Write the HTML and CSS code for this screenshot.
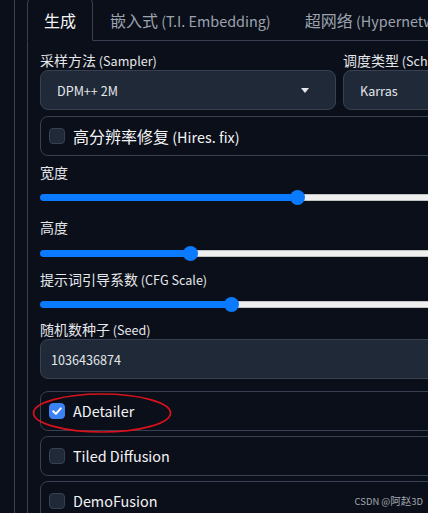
FILE: index.html
```html
<!DOCTYPE html>
<html lang="zh">
<head>
<meta charset="utf-8">
<title>生成</title>
<link rel="stylesheet" href="styles.css">
</head>
<body>
<div class="page">
  <div class="tab-nav">
    <div class="tab active">生成</div>
    <div class="tab">嵌入式<span class="en"> (T.I. Embedding)</span></div>
    <div class="tab">超网络<span class="en"> (Hypernetworks)</span></div>
  </div>
  <div class="panel">
    <div class="row2">
      <div class="field">
        <div class="label">采样方法<span class="en"> (Sampler)</span></div>
        <div class="select"><span class="en">DPM++ 2M</span><span class="caret"></span></div>
      </div>
      <div class="field">
        <div class="label">调度类型<span class="en"> (Schedule type)</span></div>
        <div class="select select-b"><span class="en">Karras</span></div>
      </div>
    </div>

    <div class="box hires"><span class="cb"></span><span class="cb-label">高分辨率修复<span class="en"> (Hires. fix)</span></span></div>

    <div class="label l-width">宽度</div>
    <div class="slider s-width">
      <div class="fill" style="width:257px"></div><div class="thumb"></div><div class="rest"></div>
    </div>

    <div class="label l-height">高度</div>
    <div class="slider s-height">
      <div class="fill" style="width:150px"></div><div class="thumb"></div><div class="rest"></div>
    </div>

    <div class="label l-cfg">提示词引导系数<span class="en"> (CFG Scale)</span></div>
    <div class="slider s-cfg">
      <div class="fill" style="width:191px"></div><div class="thumb"></div><div class="rest"></div>
    </div>

    <div class="label l-seed">随机数种子<span class="en"> (Seed)</span></div>
    <div class="select seed"><span class="en">1036436874</span></div>

    <div class="box acc first"><span class="cb checked"><svg viewBox="0 0 16 16" width="16" height="16"><path d="M4.2 8.3 L6.9 10.9 L11.8 5.4" fill="none" stroke="#fff" stroke-width="2" stroke-linecap="round" stroke-linejoin="round"/></svg></span><span class="cb-label en-only">ADetailer</span></div>
    <div class="box acc"><span class="cb"></span><span class="cb-label en-only">Tiled Diffusion</span></div>
    <div class="box acc"><span class="cb"></span><span class="cb-label en-only">DemoFusion</span></div>
  </div>
</div>

<svg class="mark" width="428" height="513" viewBox="0 0 428 513">
  <ellipse cx="102" cy="413" rx="68.5" ry="19" fill="none" stroke="#d8121c" stroke-width="1.7"/>
</svg>
<div class="watermark"><span class="en">CSDN @</span>阿赵<span class="en">3D</span></div>
</body>
</html>
```

FILE: styles.css
```css
* { box-sizing: border-box; margin: 0; padding: 0; }
html, body { background: #0b0f19; }
body {
  width: 428px;
  height: 513px;
  overflow: hidden;
  position: relative;
  font-family: "Noto Sans CJK SC", "Noto Sans", sans-serif;
  color: #e5e7eb;
}
.en { font-size: 0.9em; }
.page {
  margin-left: 14px;
  border-left: 1px solid #374151;
  padding-left: 12px;
  width: 800px;
  height: 100%;
  display: flex;
  flex-direction: column;
}
.tab-nav {
  display: flex;
  margin-top: -4px;
  height: 45px;
  border-bottom: 1px solid #374151;
  flex: none;
}
.tab {
  height: 44px;
  padding: 11px 16px 0;
  line-height: 24px;
  font-size: 16px;
  color: #9ca3af;
  border: 1px solid transparent;
  border-bottom: none;
  white-space: nowrap;
}
.tab.active {
  color: #f3f4f6;
  height: 45px;
  margin-bottom: -1px;
  border-color: #374151;
  border-radius: 8px 8px 0 0;
  background: #0b0f19;
  border-bottom: 1px solid #0b0f19;
}
.panel {
  flex: 1;
  border-left: 1px solid #374151;
  padding: 10px 12px 0;
  display: flex;
  flex-direction: column;
}
.row2 {
  display: grid;
  grid-template-columns: 296px 1fr;
  column-gap: 7px;
}
.label {
  font-size: 14px;
  line-height: 18px;
  height: 18px;
  color: #e5e7eb;
  white-space: nowrap;
  overflow: hidden;
}
.select {
  margin-top: 1px;
  height: 40px;
  background: #1f2937;
  border: 1px solid #374151;
  border-radius: 8px;
  display: flex;
  align-items: center;
  padding-left: 16px;
  font-size: 14px;
  color: #e5e7eb;
}
.caret {
  margin-left: auto;
  margin-right: 26px;
  width: 0;
  height: 0;
  border-left: 4.5px solid transparent;
  border-right: 4.5px solid transparent;
  border-top: 5px solid #e5e7eb;
}
.seed { padding-left: 10px; }
.box {
  height: 40px;
  border: 1px solid #374151;
  border-radius: 8px;
  display: flex;
  align-items: center;
  padding-left: 8px;
  gap: 8px;
  flex: none;
}
.hires { margin-top: 6px; }
.cb {
  width: 16px;
  height: 16px;
  border-radius: 4px;
  background: #1f2937;
  border: 1px solid #374151;
  flex: none;
  display: flex;
}
.cb.checked { background: #3b82f6; border-color: #3b82f6; }
.cb.checked svg { margin: -1px; }
.cb-label { font-size: 16px; color: #f3f4f6; line-height: 20px; }
.cb-label.en-only { font-size: 14.4px; }
.l-width { margin-top: 7px; }
.l-height { margin-top: 11px; }
.l-cfg { margin-top: 7px; }
.l-seed { margin-top: 6px; }
.s-width { margin-top: 6px; }
.s-height { margin-top: 7px; }
.s-cfg { margin-top: 6px; }
.slider {
  height: 20px;
  display: flex;
  align-items: center;
}
.fill {
  height: 7px;
  background: #0a7aff;
  border-radius: 3.5px 0 0 3.5px;
  flex: none;
}
.thumb {
  width: 15px;
  height: 15px;
  border-radius: 50%;
  background: #0a7aff;
  margin: 0 -7.5px;
  flex: none;
  position: relative;
  z-index: 1;
}
.rest {
  flex: 1;
  height: 7px;
  background: #efefef;
  border: 1px solid #c2c2c2;
  border-left: none;
  border-radius: 0 3.5px 3.5px 0;
}
.acc { margin-top: 5px; }
.acc.first { margin-top: 12px; }
.mark {
  position: absolute;
  left: 0;
  top: 0;
  pointer-events: none;
}
.watermark {
  position: absolute;
  right: 5px;
  bottom: 5px;
  font-size: 10.5px;
  color: #a3a8b0;
  white-space: nowrap;
}
```
